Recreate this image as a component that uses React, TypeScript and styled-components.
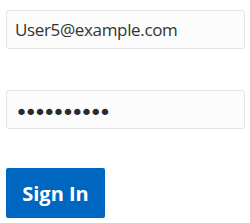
import React, { useState } from 'react';
import styled, { createGlobalStyle } from 'styled-components';

const GlobalStyle = createGlobalStyle`
	html, body {
		margin: 0;
		padding: 0;
		background: #ffffff;
	}
`;

function App() {
	const [email, setEmail] = useState("User5@example.com");
	const [password, setPassword] = useState("password12");

	return (
		<>
			<GlobalStyle />
			<Form onSubmit={(event) => { event.preventDefault(); }}>
				<TextInput type="text" value={email} onChange={(event) => { setEmail(event.target.value); }} />
				<TextInput type="password" value={password} onChange={(event) => { setPassword(event.target.value); }} />
				<SignInButton type="submit">Sign In</SignInButton>
			</Form>
		</>
	);
}

export default App;

const Form = styled.form`
	display: flex;
	flex-direction: column;
	align-items: flex-start;
	gap: 41px;
	padding: 10px 5px 0 6px;
	font-family: "Open Sans", "Noto Sans", sans-serif;
`;

const TextInput = styled.input`
	box-sizing: border-box;
	width: 239px;
	height: 39px;
	margin: 0;
	padding: 0 8px;
	border: 1px solid #e3e3e3;
	border-radius: 3px;
	background-color: #fcfcfc;
	color: #333333;
	font-family: "Open Sans", "Noto Sans", sans-serif;
	font-size: 17px;
	letter-spacing: -0.35px;
	outline: none;

	&[type="password"] {
		padding-top: 5px;
		font-family: "DejaVu Sans", sans-serif;
		font-size: 22px;
		letter-spacing: -3.7px;
		color: #2a2a2a;
	}
`;

const SignInButton = styled.button`
	box-sizing: border-box;
	width: 99px;
	height: 50px;
	margin-top: -2px;
	padding: 0;
	border: none;
	border-radius: 2px;
	background-color: #0067c0;
	color: #ffffff;
	font-family: "Open Sans", "Noto Sans", sans-serif;
	font-size: 20px;
	font-weight: 700;
	cursor: pointer;
`;
